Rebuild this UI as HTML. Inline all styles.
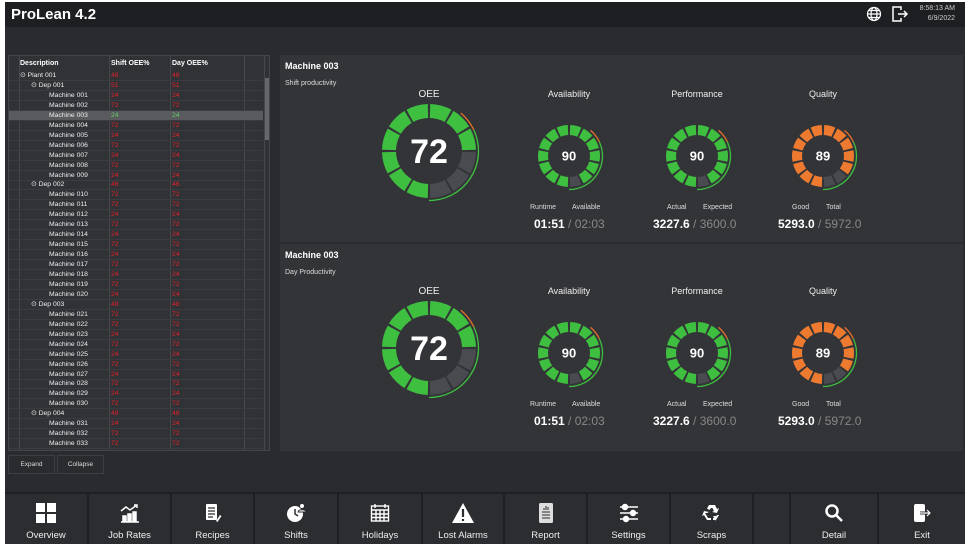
<!DOCTYPE html>
<html><head><meta charset="utf-8">
<style>
*{box-sizing:border-box;margin:0;padding:0}
body{width:975px;height:550px;background:#fff;font-family:"Liberation Sans",sans-serif;position:relative;overflow:hidden}
#app{position:absolute;left:5px;top:2px;width:960px;height:542px;background:#2a2b2e}
#title{position:absolute;left:0;top:0;width:960px;height:25px;background:#1e1f22;color:#fff}
#title .t{position:absolute;left:6px;top:4px;font-size:15px;font-weight:bold}
#title .clk{position:absolute;right:10px;top:2px;font-size:7px;color:#ccc;text-align:right;line-height:10px}
#tree{position:absolute;left:3px;top:53px;width:262px;height:396px;background:#313236;border:1px solid #44454a;overflow:hidden}
.row{position:absolute;left:0;height:10px;width:254px;font-size:6.8px;color:#eee;line-height:10px;border-bottom:1px solid #3b3c41}
.row span{position:absolute}
.hd{font-weight:bold;font-size:7px;color:#fff;border-bottom:none}
.vl{position:absolute;top:0;bottom:0;width:1px;background:#46474c}
.btn{position:absolute;top:453px;height:19px;border:1px solid #3d3e43;font-size:6.5px;color:#ddd;text-align:center;line-height:17px}
.panel{position:absolute;left:275px;width:683px;background:#333438}
.mt{position:absolute;left:5px;font-size:9px;font-weight:bold;color:#fff}
.st{position:absolute;left:5px;font-size:7px;color:#ddd}
.lab{position:absolute;font-size:9px;color:#eee;text-align:center;width:120px}
.sm{position:absolute;font-size:7px;color:#ddd}
.val{position:absolute;font-size:12px;font-weight:bold;color:#fff;white-space:nowrap}
.val i{font-style:normal;font-weight:normal;color:#888}
#nav{position:absolute;left:0;top:490px;width:960px;height:52px;background:#1e1f22}
.nb{position:absolute;top:2px;height:50px;background:#2c2d31;color:#eee;font-size:9.5px;text-align:center}
.nb .lb{position:absolute;left:0;right:0;top:36px}
.nb svg{position:absolute;left:50%;top:9px;transform:translateX(-50%)}
</style></head><body>
<div id="app">
<div id="title"><div class="t">ProLean 4.2</div>
<svg style="position:absolute;left:861px;top:4px" width="16" height="16" viewBox="0 0 16 16" fill="none" stroke="#fff" stroke-width="1.2"><circle cx="8" cy="8" r="6.5"/><ellipse cx="8" cy="8" rx="3" ry="6.5"/><path d="M1.5 8h13M2.5 4.5h11M2.5 11.5h11"/></svg>
<svg style="position:absolute;left:886px;top:3px" width="18" height="18" viewBox="0 0 18 18" fill="none" stroke="#fff" stroke-width="1.5"><path d="M10 5V2H2v14h8v-3"/><path d="M7 9h9M13 6l3 3-3 3"/></svg>
<div class="clk">8:58:13 AM<br>6/9/2022</div></div>
<div id="tree"></div>
<div class="btn" style="left:3px;width:47px">Expand</div>
<div class="btn" style="left:52px;width:47px">Collapse</div>
<div class="panel" style="top:53px;height:187px" id="p1"></div>
<div class="panel" style="top:242px;height:207px" id="p2"></div>
<div id="nav"></div>
</div>
<script>
var tree=document.getElementById('tree');
var h='';
[10,100,161,235,255].forEach(function(x){h+='<div class="vl" style="left:'+x+'px"></div>'});
h+='<div class="row hd" style="top:3px"><span style="left:11px">Description</span><span style="left:102px">Shift OEE%</span><span style="left:163px">Day OEE%</span></div>';
var rows=[['P','Plant 001',48]];var vals=[72,24,72,24,72,24,72,24,72,24,72];var n=1;
for(var d=1;d<=4;d++){rows.push(['D','Dep 00'+d,[51,46,48,48][d-1]]);var c=d==1?9:(d==2?11:(d==3?10:3));for(var k=0;k<c;k++){rows.push(['M','Machine '+('00'+n).slice(-3),vals[n%11]]);n++;}}
rows.forEach(function(r,i){var y=15+i*9.95;var sel=(r[1]=='Machine 003');var col=sel?'#6c6':'#e0202a';
var lx=r[0]=='P'?11:(r[0]=='D'?22:40);var pre=r[0]=='M'?'':'⊙ ';
h+='<div class="row" style="top:'+y+'px;'+(sel?'background:#5a5b5f;':'')+'"><span style="left:'+lx+'px">'+pre+r[1]+'</span><span style="left:102px;color:'+col+'">'+r[2]+'</span><span style="left:163px;color:'+col+'">'+r[2]+'</span></div>';});
h+='<div style="position:absolute;left:256px;top:22px;width:4px;height:62px;background:#66676b"></div>';
tree.innerHTML=h;
function arc(cx,cy,r,a0,a1){var p=function(a){a=(a-90)*Math.PI/180;return (cx+r*Math.cos(a)).toFixed(2)+' '+(cy+r*Math.sin(a)).toFixed(2)};return 'M'+p(a0)+' A'+r+' '+r+' 0 '+((a1-a0)>180?1:0)+' 1 '+p(a1);}
function gauge(cx,cy,R,w,segs,v,color,fs,gap){var s='';var on=Math.round(v/100*segs);
for(var i=0;i<segs;i++){var a0=180+i*360/segs+gap,a1=180+(i+1)*360/segs-gap;s+='<path d="'+arc(cx,cy,R,a0,a1)+'" stroke="'+(i<on?color:'#4a4b50')+'" stroke-width="'+w+'" fill="none"/>';}
var ro=R+w/2+2.5;s+='<path d="'+arc(cx,cy,ro,40,65)+'" stroke="#e8702a" stroke-width="1.3" fill="none"/><path d="'+arc(cx,cy,ro,65,180)+'" stroke="#3fbf3f" stroke-width="1.3" fill="none"/>';
s+='<text x="'+cx+'" y="'+(cy+fs*0.36)+'" font-size="'+fs+'" fill="#fff" text-anchor="middle" font-family="Liberation Sans" font-weight="bold">'+v+'</text>';return s;}
function panel(id,title,sub,top){var el=document.getElementById(id);var o='<div class="mt" style="top:6px">'+title+'</div><div class="st" style="top:25px">'+sub+'</div>';
var dy=top;
o+='<div class="lab" style="left:89px;top:'+(dy+34)+'px;font-size:10px">OEE</div>';
o+='<div class="lab" style="left:229px;top:'+(dy+34)+'px">Availability</div><div class="lab" style="left:357px;top:'+(dy+34)+'px">Performance</div><div class="lab" style="left:483px;top:'+(dy+34)+'px">Quality</div>';
o+='<svg style="position:absolute;left:0;top:0" width="683" height="200">'+gauge(149,dy+96,40,14,12,72,'#3fbf3f',34,1.5)+gauge(289,dy+101,26,10,14,90,'#3fbf3f',13,2.2)+gauge(417,dy+101,26,10,14,90,'#3fbf3f',13,2.2)+gauge(543,dy+101,26,10,14,89,'#ee7a30',13,2.2)+'</svg>';
var L=[[250,'Runtime',292,'Available','01:51','02:03'],[387,'Actual',423,'Expected','3227.6','3600.0'],[512,'Good',546,'Total','5293.0','5972.0']];
L.forEach(function(l,i){o+='<div class="sm" style="left:'+l[0]+'px;top:'+(dy+149)+'px">'+l[1]+'</div><div class="sm" style="left:'+l[2]+'px;top:'+(dy+149)+'px">'+l[3]+'</div>';
o+='<div class="val" style="left:'+[254,373,498][i]+'px;top:'+(dy+162)+'px">'+l[4]+' <i>/ '+l[5]+'</i></div>';});
el.innerHTML=o;}
panel('p1','Machine 003','Shift productivity',0);
panel('p2','Machine 003','Day Productivity',8);
var icons={
Overview:'<svg width="20" height="20" viewBox="0 0 20 20"><rect x="0" y="0" width="9" height="9" fill="#fff"/><rect x="11" y="0" width="9" height="9" fill="#fff"/><rect x="0" y="11" width="9" height="9" fill="#fff"/><rect x="11" y="11" width="9" height="9" fill="#fff"/></svg>',
'Job Rates':'<svg width="20" height="20" viewBox="0 0 20 20" fill="none" stroke="#fff" stroke-width="1.5"><path d="M1 8l5-4 4 3 7-5M14 2h3v3"/><path d="M1 19h18"/><rect x="3" y="13" width="3" height="5" fill="#fff"/><rect x="8" y="11" width="3" height="7" fill="#fff"/><rect x="13" y="9" width="3" height="9" fill="#fff"/></svg>',
Recipes:'<svg width="20" height="20" viewBox="0 0 20 20"><rect x="3" y="1" width="11" height="16" rx="1" fill="#fff"/><path d="M5 5h7M5 8h7M5 11h7M5 14h5" stroke="#2c2d31" stroke-width="1.2"/><path d="M13 18l4-6 1.5 1-4 6z" fill="#fff"/></svg>',
Shifts:'<svg width="20" height="20" viewBox="0 0 20 20"><circle cx="9" cy="11" r="8" fill="#fff"/><path d="M9 6v5l3 2" stroke="#2c2d31" stroke-width="1.5" fill="none"/><circle cx="16" cy="3" r="2.5" fill="#fff" stroke="#2c2d31"/><path d="M12 9c0-3 8-3 8 0z" fill="#fff" stroke="#2c2d31"/></svg>',
Holidays:'<svg width="20" height="20" viewBox="0 0 20 20" fill="none" stroke="#fff" stroke-width="1.4"><rect x="1.5" y="3" width="17" height="15"/><path d="M1.5 7h17M1.5 11h17M1.5 14.5h17M6 7v11M10 7v11M14 7v11M5 1v4M15 1v4"/></svg>',
'Lost Alarms':'<svg width="22" height="20" viewBox="0 0 22 20"><path d="M11 0L22 20H0z" fill="#fff"/><path d="M11 6v8M11 16v2" stroke="#2c2d31" stroke-width="2.2"/></svg>',
Report:'<svg width="16" height="20" viewBox="0 0 16 20"><rect x="1" y="0" width="14" height="20" rx="1.5" fill="#ddd"/><path d="M4 9h8M4 12h8M4 15h8" stroke="#2c2d31"/><path d="M6 7V5M8 7V3M10 7V4" stroke="#2c2d31"/></svg>',
Settings:'<svg width="20" height="20" viewBox="0 0 20 20" stroke="#fff" stroke-width="1.5" fill="#fff"><path d="M1 4h18M1 10h18M1 16h18"/><circle cx="6" cy="4" r="2.5"/><circle cx="14" cy="10" r="2.5"/><circle cx="7" cy="16" r="2.5"/></svg>',
Scraps:'<svg width="20" height="20" viewBox="0 0 20 20" fill="#fff"><path d="M7 2h6l2 4 2-1-2 5-5-1 2-1-1.5-3H9L7.5 7 5 5.5z"/><path d="M3 10l3 5h3v2H5l-3-5-2 1 2-5 5 1-2 1z"/><path d="M17 12l-3 5h-3v-2h2l2-3z"/><path d="M11 13l3 0 0 5z"/></svg>',
Detail:'<svg width="20" height="20" viewBox="0 0 20 20" fill="none" stroke="#fff" stroke-width="2.5"><circle cx="8" cy="8" r="5.5"/><path d="M12 12l6 6"/></svg>',
Exit:'<svg width="20" height="20" viewBox="0 0 20 20"><rect x="2" y="1" width="11" height="18" rx="2" fill="#fff"/><path d="M8 10h10M15 7l3 3-3 3" stroke="#2c2d31" stroke-width="3" fill="none"/><path d="M8 10h10M15 7l3 3-3 3" stroke="#fff" stroke-width="1.2" fill="none"/></svg>'};
var B=[['Overview',0,82],['Job Rates',84,81],['Recipes',167,81],['Shifts',250,82],['Holidays',334,82],['Lost Alarms',418,80],['Report',500,81],['Settings',583,81],['Scraps',666,81],['',749,35],['Detail',786,86],['Exit',874,86]];
var nh='';B.forEach(function(b){nh+='<div class="nb" style="left:'+b[1]+'px;width:'+b[2]+'px">'+(icons[b[0]]||'')+'<div class="lb">'+b[0]+'</div></div>';});
document.getElementById('nav').innerHTML=nh;
</script>
</body></html>
